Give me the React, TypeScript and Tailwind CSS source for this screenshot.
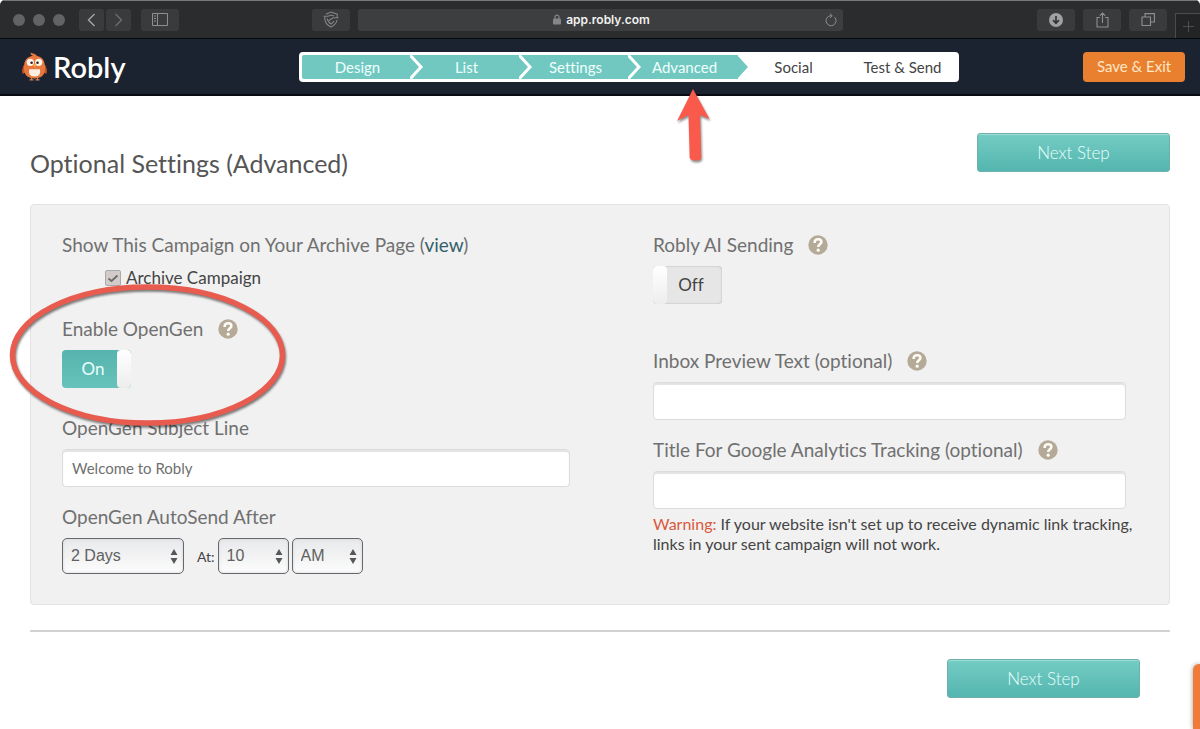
import { useState, type ReactNode } from "react";

const steps = [
  { name: "Design", state: "done" },
  { name: "List", state: "done" },
  { name: "Settings", state: "done" },
  { name: "Advanced", state: "current" },
  { name: "Social", state: "todo" },
  { name: "Test & Send", state: "todo" },
];

function ToolButton({ label, wide = true, children }: { label: string; wide?: boolean; children: ReactNode }) {
  return (
    <button
      type="button"
      aria-label={label}
      className={`${wide ? "w-[38px]" : "w-[25px]"} flex h-[22px] shrink-0 items-center justify-center rounded-[3px] bg-[#3a3b3c] text-[#8e8f90]`}
    >
      {children}
    </button>
  );
}

function BrowserBar() {
  return (
    <div className="flex h-[39px] items-center border-t border-b border-t-[#77787a] border-b-[#07090d] bg-[#2b2c2e] pl-[13px]">
      <div className="flex gap-2">
        <span className="size-[12px] rounded-full bg-[#626365]" />
        <span className="size-[12px] rounded-full bg-[#626365]" />
        <span className="size-[12px] rounded-full bg-[#626365]" />
      </div>
      <div className="ml-[14px] flex gap-[2px]">
        <ToolButton label="Back" wide={false}>
          <svg width="9" height="14" viewBox="0 0 9 14" fill="none" stroke="#a5a6a7" strokeWidth="1.4">
            <path d="M7.5 1 1.5 7l6 6" />
          </svg>
        </ToolButton>
        <ToolButton label="Forward" wide={false}>
          <svg width="9" height="14" viewBox="0 0 9 14" fill="none" stroke="#707173" strokeWidth="1.2">
            <path d="m1.500 1 6 6-6 6" />
          </svg>
        </ToolButton>
      </div>
      <div className="ml-[10px]">
        <ToolButton label="Show sidebar">
          <svg width="16" height="13" viewBox="0 0 16 13" fill="none" stroke="currentColor">
            <path d="M.5.5h15v12H.5zM5.500.5v12M2 3h2M2 5.500h2M2 8h2" />
          </svg>
        </ToolButton>
      </div>
      <div className="grow-[133]" />
      <ToolButton label="Privacy report">
        <svg width="16" height="17" viewBox="0 0 16 17" fill="none" stroke="#858688" strokeWidth="1.100">
          <path d="M3 3.200 8 1l6.200 2.200V7M14.100 9c-.6 3-2.700 5.400-6.100 7-3.900-1.800-6.200-4.500-6.200-8.500V6" />
          <path d="M.5 5.200h4.300L8.500 4l2.500 1M4.300 7.500c.2 2.400 1.500 4.200 3.700 5.500 1.300-.7 2.300-1.700 3-3M6 9.500l4-2.700h5.500" />
        </svg>
      </ToolButton>
      <div className="ml-2 flex h-[22px] w-[485px] items-center rounded-[3px] bg-[#3d3e3f] pr-[6px] pl-5">
        <div className="flex grow items-center justify-center gap-[5px]">
          <svg width="8" height="11" viewBox="0 0 8 11">
            <path d="M2 5V3.200a2 2 0 0 1 4 0V5" fill="none" stroke="#858687" strokeWidth="1.200" />
            <rect y="4.500" width="8" height="6" rx="1" fill="#858687" />
          </svg>
          <input
            aria-label="Address"
            defaultValue="app.robly.com"
            className="field-sizing-content bg-transparent font-['Inter','Liberation_Sans',sans-serif] text-[12px] leading-[20px] font-semibold text-[#f1f1f1] outline-none"
          />
        </div>
        <button type="button" aria-label="Reload">
          <svg width="12" height="14" viewBox="0 0 12 14" fill="none" stroke="#8d8e8f">
            <path d="M9.600 4.200A5 5 0 1 1 6 2.700h.8M5 .7l2.200 2L5 4.900" />
          </svg>
        </button>
      </div>
      <div className="grow-[194]" />
      <div className="flex gap-2">
        <ToolButton label="Downloads">
          <svg width="14" height="14" viewBox="0 0 14 14">
            <circle cx="7" cy="7" r="7" fill="#a0a1a2" />
            <path d="M7 3v7M4 7.200l3 3 3-3" fill="none" stroke="#353638" strokeWidth="1.700" />
          </svg>
        </ToolButton>
        <ToolButton label="Share">
          <svg width="13" height="16" viewBox="0 0 13 16" fill="none" stroke="currentColor" strokeWidth="1.100">
            <path d="M4 5.500H1v9.500h11V5.500H9M6.500 11V1M3.800 3.700 6.500 1l2.700 2.700" />
          </svg>
        </ToolButton>
        <ToolButton label="Tab overview">
          <svg width="14" height="13" viewBox="0 0 14 13" fill="none" stroke="currentColor" strokeWidth="1.100">
            <path d="M1 4h8.500v8.500H1zM4 4V.6h9.400v8.400H9.500" />
          </svg>
        </ToolButton>
      </div>
      <button
        type="button"
        aria-label="New tab"
        className="ml-2 flex h-[25px] w-[25px] items-center justify-center self-end border-t border-l border-[#4b4c4d] bg-[#232425]"
      >
        <svg width="11" height="11" viewBox="0 0 11 11" stroke="#4d4e4f">
          <path d="M5.500 0v11M0 5.500h11" />
        </svg>
      </button>
    </div>
  );
}

function Logo() {
  return (
    <a href="#home" className="flex items-center gap-[5px] text-white">
      <svg width="27" height="29" viewBox="0 0 27 29" aria-hidden="true">
        <path
          d="M12.500 3.800C10.500 3.500 9.300 2.200 9.500.5c1.200.9 2.300.7 3.700 1.300 1.300.5 2.300 1.200 3 2.200 4.600.9 7.300 4.200 7.500 8.600 1.600 2.800 2.300 5.700 1.600 8.900-.8 0-1.300-.3-1.900-.8-1.500 3.700-5 5.700-9.900 5.700s-8.300-2-9.900-5.700c-.5.5-1.200.8-1.900.8-.6-3.200 0-6.100 1.600-8.900C3.500 7.700 7 4.300 12.500 3.800Z"
          fill="#e9783f"
        />
        <path d="M3.300 12.600c-1.600 2.800-2.200 5.700-1.600 8.900.7 0 1.400-.3 1.900-.8-.8-2.700-.9-5.200-.3-8.100ZM23.700 12.600c1.600 2.800 2.300 5.700 1.600 8.900-.8 0-1.300-.3-1.900-.8.8-2.700.9-5.200.3-8.100Z" fill="#c9501f" />
        <path d="M8.300 17.300h10.600c.8 4.200-.4 7.200-5.300 7.200s-6.200-3-5.300-7.200Z" fill="#fdeee4" />
        <circle cx="9.300" cy="10.300" r="3.600" fill="#fff5ea" />
        <circle cx="17.700" cy="10.300" r="3.600" fill="#fff5ea" />
        <circle cx="10.600" cy="10.700" r="1.300" fill="#34211c" />
        <circle cx="16.500" cy="10.700" r="1.300" fill="#34211c" />
        <path d="M11.700 12.300h3.800l-1.900 3z" fill="#f7b547" />
        <path d="M10.500 25.800v1.700M16.500 25.800v1.700M8.500 27.800h4M14.500 27.800h4" stroke="#ca8058" strokeWidth="1.200" />
      </svg>
      <span className="text-[29px] leading-[36px] font-semibold">Robly</span>
    </a>
  );
}

function StepNav() {
  return (
    <nav aria-label="Campaign steps">
      <ol className="grid grid-cols-6 rounded-[4px] bg-white p-[3px] text-[15px] leading-[24px]">
        {steps.map((step) => (
          <li key={step.name} className={`relative pl-[2px] text-center ${step.state === "todo" ? "bg-white text-[#444]" : "bg-[#70c8c1] text-[#f0fffc] first:rounded-l-[2px]"}`}>
            <a href={`#${step.name.toLowerCase()}`} className="block whitespace-nowrap">
              {step.name}
            </a>
            {step.state !== "todo" && (
              <svg className="absolute top-0 left-full z-10 -ml-px" width="14" height="24" viewBox="0 0 14 24" fill="#70c8c1">
                <path d="M0 0 11 12 0 24" stroke={step.state === "done" ? "#fff" : "none"} strokeWidth="3" />
              </svg>
            )}
            {step.state === "current" && (
              <svg className="absolute top-[34px] left-[45px] z-20 drop-shadow-[1px_2px_1px_rgba(0,0,0,0.45)]" width="38" height="76" viewBox="0 0 38 76">
                <path d="M19 0 35.500 30 26 26l1.200 42.500q0 3-5.500 3t-6-3L14.500 26 3 32Z" fill="#fa5a4c" />
              </svg>
            )}
          </li>
        ))}
      </ol>
    </nav>
  );
}

function NextStep() {
  return (
    <button
      type="button"
      className="h-[39px] w-[193px] rounded-[3px] border border-[#6fb0aa] bg-linear-to-b from-[#74ccc4] to-[#53b6af] text-[17px] font-light text-[#e9fffc] shadow-[inset_0_1px_0_#9cdcd6]"
    >
      Next Step
    </button>
  );
}

function Help({ topic }: { topic: string }) {
  return (
    <button type="button" aria-label={`Help: ${topic}`} className="shrink-0">
      <svg width="20" height="20" viewBox="0 0 20 20">
        <circle cx="10" cy="10" r="9.700" fill="#b5aa97" />
        <path d="M6.700 8V6.700C7 5 8.200 4.200 10.100 4.200c2 0 3.300 1.100 3.300 2.700 0 2.400-3.200 2.300-3.200 5.100" fill="none" stroke="#fffdf6" strokeWidth="2.500" />
        <circle cx="10.200" cy="15.200" r="1.600" fill="#fffdf6" />
      </svg>
    </button>
  );
}

function Toggle({ label, initial }: { label: string; initial: boolean }) {
  const [on, setOn] = useState(initial);
  return (
    <button
      type="button"
      role="switch"
      aria-checked={on}
      aria-label={label}
      onClick={() => setOn(!on)}
      className={`mt-2 flex h-[38px] w-[69px] overflow-hidden rounded-[4px] text-[17px] ${on ? "bg-linear-to-b from-[#56b4ae] to-[#65c3bb] text-[#e9fffc]" : "flex-row-reverse bg-[#e6e6e6] text-[#444] shadow-[inset_0_0_2px_#aaa]"}`}
    >
      <span className={`flex h-full grow items-center justify-center ${on ? "pl-[7px]" : "pr-[7px]"}`}>{on ? "On" : "Off"}</span>
      <span className="h-full w-[14px] rounded-[4px] bg-linear-to-b from-white to-[#ededed]" />
    </button>
  );
}

function Label({ htmlFor, children, help }: { htmlFor?: string; children: ReactNode; help?: string }) {
  return (
    <div className="flex items-center gap-[15px] text-[19px] leading-[26px] text-[#707070]">
      {htmlFor ? <label htmlFor={htmlFor}>{children}</label> : <span>{children}</span>}
      {help && <Help topic={help} />}
    </div>
  );
}

function TextBox({ id, value = "" }: { id: string; value?: string }) {
  return (
    <input
      id={id}
      type="text"
      defaultValue={value}
      className="mt-2 h-[38px] w-full rounded-[4px] border border-[#dcdcdc] bg-white px-[9px] text-[15px] text-[#707070] shadow-[inset_0_2px_1px_#e4e4e4] outline-none"
    />
  );
}

function Select({ label, id, options, wide = false }: { label: string; id?: string; options: string[]; wide?: boolean }) {
  return (
    <div className={`relative ${wide ? "w-[122px]" : "w-[71px]"}`}>
      <select
        id={id}
        aria-label={label}
        className="block h-[36px] w-full appearance-none rounded-[5px] border border-[#66686d] bg-linear-to-b from-[#e8e9eb] to-[#fcfcfc] pl-2 font-['Liberation_Sans',sans-serif] text-[16px] text-[#606060] shadow-[inset_0_0_3px_#d0d1d4]"
      >
        {options.map((option) => (
          <option key={option}>{option}</option>
        ))}
      </select>
      <svg className="pointer-events-none absolute top-[11px] right-[6px]" width="8" height="15" viewBox="0 0 8 15" fill="#55575b">
        <path d="M4 0 7.500 6h-7zM4 15 .5 9h7z" />
      </svg>
    </div>
  );
}

export default function App() {
  return (
    <div className="min-h-screen overflow-hidden bg-white font-['Lato','Open_Sans',sans-serif] [font-variant-ligatures:none]">
      <div className="overflow-hidden rounded-t-[5px]">
        <BrowserBar />
      </div>
      <header className="grid h-[57px] grid-cols-[278fr_660fr_226fr] items-center border-b-2 border-[#080c12] bg-[#1c2330] pr-[15px] pl-[21px]">
        <Logo />
        <StepNav />
        <div className="flex justify-end">
          <button type="button" className="h-[30px] w-[102px] rounded-[4px] bg-[#e98030] text-[15px] text-[#ffe6c6]">
            Save &amp; Exit
          </button>
        </div>
      </header>

      <main className="px-[30px] pt-[37px]">
        <div className="flex items-start justify-between">
          <h1 className="mt-[14px] text-[25px] leading-[32px] text-[#555]">Optional Settings (Advanced)</h1>
          <NextStep />
        </div>

        <form
          className="mt-[25px] grid grid-cols-[508fr_485fr] gap-x-[83px] rounded-[4px] border border-[#e3e3e3] bg-[#f1f1f1] px-[31px] pt-[27px] pb-[30px]"
          onSubmit={(event) => event.preventDefault()}
        >
          <div>
            <Label>
              Show This Campaign on Your Archive Page (<a href="#archive" className="text-[#35606b]">view</a>)
            </Label>
            <label className="mt-2 ml-[43px] flex items-center gap-[5px] text-[17px] leading-[24px] text-[#444]">
              <span className="relative size-[16px]">
                <input type="checkbox" defaultChecked className="peer block size-[16px] appearance-none rounded-[2px] border border-[#aaa] bg-[#d3caca]" />
                <svg className="pointer-events-none absolute inset-0 hidden peer-checked:block" width="16" height="16" viewBox="0 0 16 16" fill="none" stroke="#6c6868" strokeWidth="1.700">
                  <path d="m3.500 8.500 3 2.500 6-5.500" />
                </svg>
              </span>
              Archive Campaign
            </label>

            <div className="relative mt-[26px]">
              <Label help="OpenGen">Enable OpenGen</Label>
              <Toggle label="Enable OpenGen" initial />
              <svg
                className="pointer-events-none absolute -top-9 -left-14 z-10 max-w-none drop-shadow-[1px_2px_1px_rgba(0,0,0,0.5)]"
                width="284"
                height="152"
                viewBox="0 0 284 152"
                fill="none"
              >
                <ellipse cx="141.500" cy="75" rx="135" ry="68" stroke="#e85c50" strokeWidth="5.500" />
              </svg>
            </div>

            <div className="mt-[27px]">
              <Label htmlFor="subject">OpenGen Subject Line</Label>
              <TextBox id="subject" value="Welcome to Robly" />
            </div>

            <div className="mt-[17px]">
              <Label htmlFor="delay">OpenGen AutoSend After</Label>
              <div className="mt-2 flex items-center">
                <Select label="Days" id="delay" wide options={["2 Days", "3 Days", "4 Days"]} />
                <span className="mr-[3px] ml-[13px] text-[14px] text-[#444]">At:</span>
                <Select label="Hour" options={["10", "11", "12"]} />
                <span className="w-[3px]" />
                <Select label="AM or PM" options={["AM", "PM"]} />
              </div>
            </div>
          </div>

          <div>
            <Label help="Robly AI">Robly AI Sending</Label>
            <Toggle label="Robly AI Sending" initial={false} />

            <div className="mt-11 pr-3">
              <Label htmlFor="preview" help="Inbox preview text">Inbox Preview Text (optional)</Label>
              <TextBox id="preview" />
            </div>

            <div className="mt-[17px] pr-3">
              <Label htmlFor="analytics" help="Google Analytics">Title For Google Analytics Tracking (optional)</Label>
              <TextBox id="analytics" />
            </div>
            <p className="mt-[5px] text-[16px] leading-[20px] text-[#444]">
              <span className="text-[#d9593c]">Warning:</span> If your website isn't set up to receive dynamic link tracking, links in your sent campaign will not work.
            </p>
          </div>
        </form>

        <div className="mt-[25px] flex justify-end border-t-2 border-[#d2d2d2] pt-[27px] pr-[30px]">
          <NextStep />
        </div>
      </main>
      <button
        type="button"
        aria-label="Support"
        className="fixed right-0 bottom-0 h-[65px] w-[7px] rounded-tl-[6px] bg-[#ef7a3a] shadow-[0_0_5px_rgba(0,0,0,0.4)]"
      />
    </div>
  );
}
